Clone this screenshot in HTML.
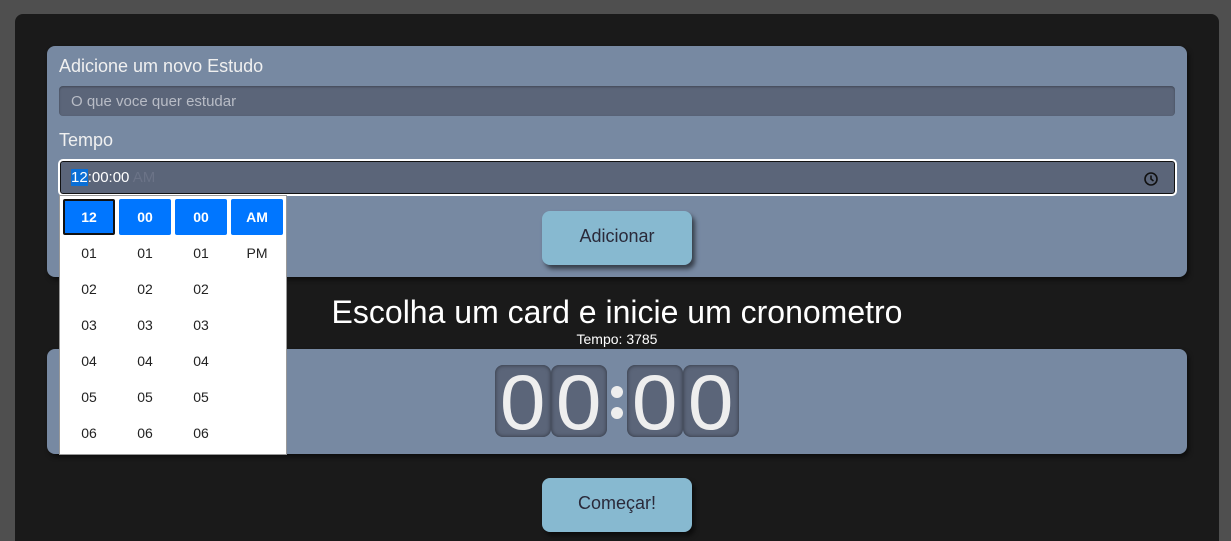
<!DOCTYPE html><html><head><style>
*{box-sizing:border-box;margin:0;padding:0}
html,body{width:1231px;height:541px;overflow:hidden}
body{background:#4f4f4f;font-family:"Liberation Sans",sans-serif;position:relative}
.main{position:absolute;left:15px;top:14px;width:1204px;height:527px;background:#1a1a1a;border-radius:8px 8px 0 0}
.card{position:absolute;left:47px;width:1140px;background:#7789a2;border-radius:8px;box-shadow:2px 3px 5px rgba(0,0,0,.5)}
.lbl{position:absolute;left:59px;color:#f0f0f0;font-size:18px}
.inp{position:absolute;left:59px;top:86px;width:1116px;height:30px;background:#5b6579;border-radius:4px;color:#b8bcc6;font-size:15px;padding:7px 12px;box-shadow:inset 0 1px 2px rgba(0,0,0,.3)}
.time{position:absolute;left:58px;top:159px;width:1119px;height:37px;background:#5b6579;border:2px solid #fff;border-radius:5px;box-shadow:inset 0 0 0 1px #111}
.btn{position:absolute;left:542px;width:150px;height:54px;background:#87b9d0;border-radius:8px;box-shadow:3px 4px 5px rgba(0,0,0,.55);color:#2a2a3a;font-size:18px;text-align:center;line-height:50px}
.dig{position:absolute;top:365px;width:56px;height:72px;background:#5b6579;border-radius:8px;box-shadow:inset 0 0 4px rgba(0,0,0,.5);color:#eee;font-size:78px;text-align:center;line-height:74px;font-weight:300}
.dig span{display:inline-block;transform:scaleX(1.05)}
.dd{position:absolute;left:59px;top:195px;width:228px;height:260px;background:#fff;border:1px solid #999}
.c{position:absolute;width:52px;height:36px;font-size:14px;color:#222;text-align:center;line-height:36px}
.s{background:#0076ff;color:#fff;font-weight:bold;border-radius:2px}
.dot{position:absolute;left:611px;width:12px;height:12px;border-radius:6px;background:#eee}
</style></head><body>
<div class="main"></div>
<div class="card" style="top:46px;height:231px"></div>
<div class="lbl" style="top:56px">Adicione um novo Estudo</div>
<div class="inp">O que voce quer estudar</div>
<div class="lbl" style="top:130px">Tempo</div>
<div class="time"><span style="position:absolute;left:11px;top:8px;font-size:15px;color:#fff"><span style="background:#0a6fd6">12</span>:00:00 <span style="color:#6b7387">AM</span></span>
<svg style="position:absolute;right:16px;top:10px" width="16" height="16" viewBox="0 0 16 16"><circle cx="8" cy="8" r="6" fill="none" stroke="#111" stroke-width="1.6"/><path d="M8 4.5V8l2.5 2" fill="none" stroke="#111" stroke-width="1.6"/></svg></div>
<div class="btn" style="top:211px">Adicionar</div>
<div style="position:absolute;left:0;width:1234px;top:294px;text-align:center;color:#fff;font-size:32px">Escolha um card e inicie um cronometro</div>
<div style="position:absolute;left:0;width:1234px;top:331px;text-align:center;color:#fff;font-size:14px">Tempo: 3785</div>
<div class="card" style="top:349px;height:105px"></div>
<div class="dig" style="left:495px"><span>0</span></div><div class="dig" style="left:551px"><span>0</span></div>
<div class="dot" style="top:386px"></div><div class="dot" style="top:407px"></div>
<div class="dig" style="left:627px"><span>0</span></div><div class="dig" style="left:683px"><span>0</span></div>
<div class="btn" style="top:478px">Começar!</div>
<div class="dd">
<div class="c s" style="left:3px;top:3px;border:2px solid #111;line-height:32px">12</div><div class="c s" style="left:59px;top:3px">00</div><div class="c s" style="left:115px;top:3px">00</div><div class="c s" style="left:171px;top:3px">AM</div>
<div class="c" style="left:3px;top:39px">01</div><div class="c" style="left:59px;top:39px">01</div><div class="c" style="left:115px;top:39px">01</div><div class="c" style="left:171px;top:39px">PM</div>
<div class="c" style="left:3px;top:75px">02</div><div class="c" style="left:59px;top:75px">02</div><div class="c" style="left:115px;top:75px">02</div>
<div class="c" style="left:3px;top:111px">03</div><div class="c" style="left:59px;top:111px">03</div><div class="c" style="left:115px;top:111px">03</div>
<div class="c" style="left:3px;top:147px">04</div><div class="c" style="left:59px;top:147px">04</div><div class="c" style="left:115px;top:147px">04</div>
<div class="c" style="left:3px;top:183px">05</div><div class="c" style="left:59px;top:183px">05</div><div class="c" style="left:115px;top:183px">05</div>
<div class="c" style="left:3px;top:219px">06</div><div class="c" style="left:59px;top:219px">06</div><div class="c" style="left:115px;top:219px">06</div>
</div>
</body></html>
